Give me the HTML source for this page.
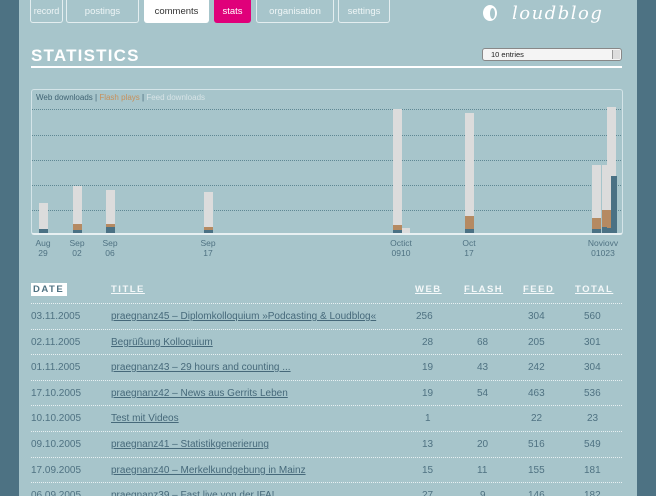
<!DOCTYPE html>
<html style="overflow:hidden;width:656px;height:496px"><head><style>
*{margin:0;padding:0;box-sizing:border-box}
body{width:656px;height:496px;overflow:hidden;background:#4d7283;font-family:"Liberation Sans",sans-serif;position:relative}
#p{position:absolute;left:19px;top:0;width:618px;height:496px;background:#a7c5cb}
.tab{position:absolute;top:0;height:23px;border:1px solid #e4eef0;border-top:none;border-radius:0 0 3px 3px;color:#eef5f6;font-size:9.5px;line-height:23px;text-align:center;white-space:nowrap;overflow:hidden}
.a{position:absolute}
.g{position:absolute;left:32px;width:589px;border-top:1px dotted #5f8894}
.b{position:absolute;width:9px}
.lbl{position:absolute;top:238px;font-size:8.5px;line-height:10px;color:#4f7282;text-align:center;width:30px}
.row{position:absolute;left:31px;width:591px;height:25px;font-size:10px;color:#4f7282;border-top:1px dotted #e8f0f2}
.row span{position:absolute;top:7px}
.row u{color:#46697a}
.h{position:absolute;top:284px;font-size:9.5px;font-weight:bold;letter-spacing:1.5px;color:#f4f8f9;text-decoration:underline}
</style></head><body>
<div id="p"></div>
<div class="tab" style="left:30px;width:33px;font-size:9px">record</div>
<div class="tab" style="left:66px;width:73px">postings</div>
<div class="tab" style="left:144px;width:65px;background:#fff;color:#333;border-color:#fff">comments</div>
<div class="tab" style="left:214px;width:37px;background:#e0007a;border-color:#e0007a;color:#fff">stats</div>
<div class="tab" style="left:256px;width:78px">organisation</div>
<div class="tab" style="left:338px;width:52px">settings</div>
<div class="a" style="left:483px;top:5px;width:14px;height:16px;border-radius:50%;background:#fff"></div>
<div class="a" style="left:490px;top:8px;width:5px;height:11px;border-radius:50%;background:#a7c5cb"></div>
<div class="a" style="left:512px;top:3px;font-family:'DejaVu Serif',serif;font-style:italic;font-size:18px;color:#fff;letter-spacing:1.5px">loudblog</div>
<div class="a" style="left:31px;top:46px;font-size:17px;font-weight:bold;letter-spacing:1.2px;color:#fff">STATISTICS</div>
<div class="a" style="left:31px;top:66px;width:591px;height:2px;background:#fff"></div>
<div class="a" style="left:482px;top:48px;width:140px;height:13px;background:#f4f4f4;border:1px solid #888;border-radius:3px;font-size:7.5px;line-height:11px;padding-left:8px;color:#222">10 entries<div class="a" style="right:1px;top:1px;width:8px;height:9px;background:#ddd;border-left:1px solid #999"></div></div>
<div class="a" style="left:31px;top:89px;width:592px;height:146px;border:1px solid #d4e4e8;border-bottom:2px solid #e8f0f2;border-radius:3px"></div>
<div class="a" style="left:36px;top:93px;font-size:8px;color:#3f6272">Web downloads | <span style="color:#c7905a">Flash plays</span> | <span style="color:#d7e3e6">Feed downloads</span></div>
<div class="g" style="top:109px"></div><div class="g" style="top:135px"></div><div class="g" style="top:160px"></div><div class="g" style="top:185px"></div><div class="g" style="top:210px"></div>
<div class="b" style="left:39px;top:203px;height:30px;background:#dcdcdc"></div><div class="b" style="left:39px;top:229px;height:4px;background:#4a7184"></div>
<div class="b" style="left:73px;top:186px;height:47px;background:#dcdcdc"></div><div class="b" style="left:73px;top:224px;height:6px;background:#b58a62"></div><div class="b" style="left:73px;top:230px;height:3px;background:#4a7184"></div>
<div class="b" style="left:106px;top:190px;height:43px;background:#dcdcdc"></div><div class="b" style="left:106px;top:224px;height:3px;background:#b58a62"></div><div class="b" style="left:106px;top:227px;height:6px;background:#4a7184"></div>
<div class="b" style="left:204px;top:192px;height:41px;background:#dcdcdc"></div><div class="b" style="left:204px;top:227px;height:3px;background:#b58a62"></div><div class="b" style="left:204px;top:230px;height:3px;background:#4a7184"></div>
<div class="b" style="left:393px;top:109px;height:124px;background:#dcdcdc"></div><div class="b" style="left:393px;top:225px;height:5px;background:#b58a62"></div><div class="b" style="left:393px;top:230px;height:3px;background:#4a7184"></div>
<div class="b" style="left:402px;top:228px;height:5px;width:8px;background:#dcdcdc"></div>
<div class="b" style="left:465px;top:113px;height:120px;background:#dcdcdc"></div><div class="b" style="left:465px;top:216px;height:13px;background:#b58a62"></div><div class="b" style="left:465px;top:229px;height:4px;background:#4a7184"></div>
<div class="b" style="left:592px;top:165px;height:68px;background:#dcdcdc"></div><div class="b" style="left:592px;top:218px;height:11px;background:#b58a62"></div><div class="b" style="left:592px;top:229px;height:4px;background:#4a7184"></div>
<div class="b" style="left:602px;top:165px;height:68px;background:#dcdcdc"></div><div class="b" style="left:602px;top:210px;height:18px;background:#b58a62"></div><div class="b" style="left:602px;top:227px;height:6px;background:#4a7184"></div>
<div class="b" style="left:607px;top:107px;height:120px;background:#dcdcdc"></div><div class="b" style="left:607px;top:210px;width:5px;height:18px;background:#b58a62"></div>
<div class="b" style="left:611px;top:176px;width:6px;height:57px;background:#4a7184"></div>
<div class="lbl" style="left:28px">Aug<br>29</div>
<div class="lbl" style="left:62px">Sep<br>02</div>
<div class="lbl" style="left:95px">Sep<br>06</div>
<div class="lbl" style="left:193px">Sep<br>17</div>
<div class="lbl" style="left:386px">Octict<br>0910</div>
<div class="lbl" style="left:454px">Oct<br>17</div>
<div class="lbl" style="left:583px;width:40px">Noviovv<br>01023</div>
<div class="a" style="left:31px;top:283px;width:36px;height:13px;background:#fff;font-size:9.5px;font-weight:bold;letter-spacing:1.5px;color:#4f7282;line-height:13px;padding-left:2px">DATE</div>
<div class="h" style="left:111px">TITLE</div>
<div class="h" style="left:415px">WEB</div>
<div class="h" style="left:464px">FLASH</div>
<div class="h" style="left:523px">FEED</div>
<div class="h" style="left:575px">TOTAL</div>
<div class="row" style="top:303px"><span style="left:0">03.11.2005</span><span style="left:80px"><u>praegnanz45 – Diplomkolloquium »Podcasting &amp; Loudblog«</u></span><span style="left:385px">256</span><span style="left:497px">304</span><span style="left:553px">560</span></div>
<div class="row" style="top:329px"><span style="left:0">02.11.2005</span><span style="left:80px"><u>Begrüßung Kolloquium</u></span><span style="left:391px">28</span><span style="left:446px">68</span><span style="left:497px">205</span><span style="left:553px">301</span></div>
<div class="row" style="top:354px"><span style="left:0">01.11.2005</span><span style="left:80px"><u>praegnanz43 – 29 hours and counting ...</u></span><span style="left:391px">19</span><span style="left:446px">43</span><span style="left:497px">242</span><span style="left:553px">304</span></div>
<div class="row" style="top:380px"><span style="left:0">17.10.2005</span><span style="left:80px"><u>praegnanz42 – News aus Gerrits Leben</u></span><span style="left:391px">19</span><span style="left:446px">54</span><span style="left:497px">463</span><span style="left:553px">536</span></div>
<div class="row" style="top:405px"><span style="left:0">10.10.2005</span><span style="left:80px"><u>Test mit Videos</u></span><span style="left:394px">1</span><span style="left:500px">22</span><span style="left:556px">23</span></div>
<div class="row" style="top:431px"><span style="left:0">09.10.2005</span><span style="left:80px"><u>praegnanz41 – Statistikgenerierung</u></span><span style="left:391px">13</span><span style="left:446px">20</span><span style="left:497px">516</span><span style="left:553px">549</span></div>
<div class="row" style="top:457px"><span style="left:0">17.09.2005</span><span style="left:80px"><u>praegnanz40 – Merkelkundgebung in Mainz</u></span><span style="left:391px">15</span><span style="left:446px">11</span><span style="left:497px">155</span><span style="left:553px">181</span></div>
<div class="row" style="top:482px;height:14px;overflow:hidden"><span style="left:0">06.09.2005</span><span style="left:80px"><u>praegnanz39 – Fast live von der IFA!</u></span><span style="left:391px">27</span><span style="left:449px">9</span><span style="left:497px">146</span><span style="left:553px">182</span></div>
</body></html>
